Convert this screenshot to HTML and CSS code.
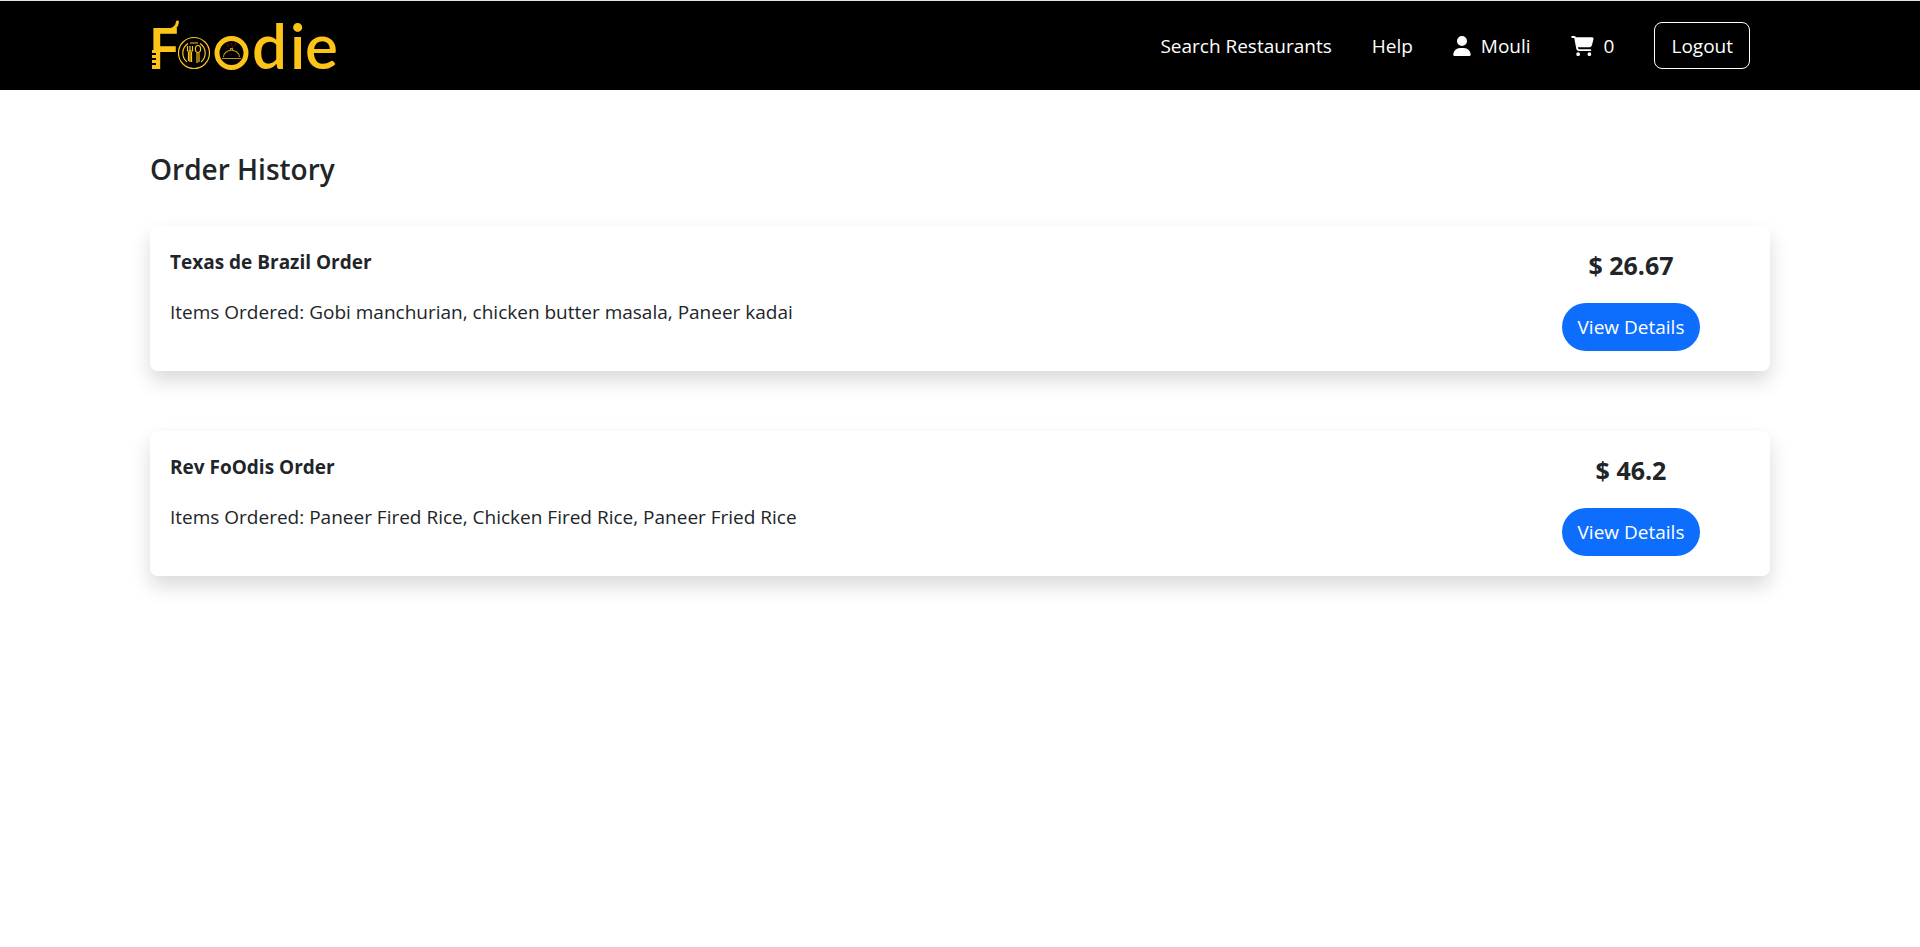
FILE: index.html
```html
<!DOCTYPE html>
<html lang="en">
<head>
<meta charset="utf-8">
<title>Foodie - Order History</title>
<link rel="stylesheet" href="styles.css">
</head>
<body>
<header class="navbar">
  <div class="container navbar-inner">
    <a class="brand" href="#" aria-label="Foodie">
      <svg class="brand-logo" viewBox="150 4 190 84" role="img">
        <text x="148" y="69" class="cap">F</text>
        <g class="letters">
          <text x="252" y="69">d</text>
          <text x="290" y="69">i</text>
          <text x="305" y="69">e</text>
        </g>
        <path class="solid" d="M152 50h4v3h-4zM152 55h4v3h-4zM152 60h4v3h-4zM152 65h5v4h-5z"/>
        <path class="notch" d="M151 54h5M151 59h5M151 64h5"/>
        <path class="swash" d="M166 30.500C173 30 177 27 177.500 22"/>
        <!-- plate with fork and spoon -->
        <circle class="line" cx="194" cy="53" r="15.500"/>
        <path class="line" d="M188 43.500A11.500 11.500 0 0 0 187 62M200 43.500A11.500 11.500 0 0 1 201 62M190 43H198"/>
        <path class="line" d="M187.500 46V51H192.500V46M190 46V62M188.500 52V61M191.500 52V62"/>
        <ellipse class="line" cx="198" cy="49" rx="2.600" ry="3.500"/>
        <path class="line" d="M197 53V63M199 53V62"/>
        <!-- covered dish -->
        <circle class="ring" cx="231.500" cy="53" r="14.500"/>
        <path class="dish" d="M223.500 57C224 48 239 48 239.500 57M222 58.500H241M230.500 50V48.500H232.500V50"/>
        <path class="steam" d="M227 44q2 1.500 1 3M231 43q-1 1.500 1 2.500t0 2.500M236 43q-2 1 -1 3"/>
      </svg>
    </a>
    <nav class="menu">
      <a href="#">Search Restaurants</a>
      <a href="#">Help</a>
      <a href="#"><svg class="icon-user" viewBox="0 0 448 512"><path d="M224 256A128 128 0 1 0 224 0a128 128 0 1 0 0 256zm-45.700 48C79.800 304 0 383.800 0 482.300C0 498.700 13.300 512 29.700 512H418.300c16.400 0 29.700-13.300 29.700-29.700C448 383.800 368.200 304 269.700 304H178.300z"/></svg>Mouli</a>
      <a href="#" aria-label="Cart, 0 items"><svg class="icon-cart" viewBox="0 0 576 512"><path d="M0 24C0 10.700 10.700 0 24 0H69.500c22 0 41.500 12.800 50.600 32h411c26.300 0 45.500 25 38.600 50.400l-41 152.300c-8.500 31.400-37 53.300-69.500 53.300H170.700l5.400 28.500c2.200 11.300 12.100 19.500 23.600 19.500H488c13.300 0 24 10.700 24 24s-10.700 24-24 24H199.700c-34.600 0-64.300-24.600-70.700-58.500L77.400 54.500c-.7-3.800-4-6.500-7.900-6.500H24C10.700 48 0 37.300 0 24zM128 464a48 48 0 1 1 96 0 48 48 0 1 1-96 0zm336-48a48 48 0 1 1 0 96 48 48 0 1 1 0-96z"/></svg>0</a>
      <button class="logout" type="button">Logout</button>
    </nav>
  </div>
</header>
<main class="container page">
  <h1 class="title">Order History</h1>
  <section class="orders">
    <article class="card">
      <div class="info">
        <h2 class="name">Texas de Brazil Order</h2>
        <p>Items Ordered: Gobi manchurian, chicken butter masala, Paneer kadai</p>
      </div>
      <div class="summary">
        <p class="price">$ 26.67</p>
        <button class="details" type="button">View Details</button>
      </div>
    </article>
    <article class="card">
      <div class="info">
        <h2 class="name">Rev FoOdis Order</h2>
        <p>Items Ordered: Paneer Fired Rice, Chicken Fired Rice, Paneer Fried Rice</p>
      </div>
      <div class="summary">
        <p class="price">$ 46.2</p>
        <button class="details" type="button">View Details</button>
      </div>
    </article>
  </section>
</main>
</body>
</html>
```

FILE: styles.css
```css
* { box-sizing: border-box; }
body { margin: 0; background: #fff; color: #212529; font: 19px/30px "Open Sans", "Noto Sans", sans-serif; }
h1, h2, p { margin: 0; }
button { font: inherit; cursor: pointer; }
.container { width: 100%; max-width: 1650px; margin: 0 auto; padding: 0 15px; }
.page { padding-bottom: 60px; }
.navbar { background: #000; border-top: 1px solid #dfe6e4; }
.navbar-inner { display: flex; align-items: center; justify-content: space-between; min-height: 89px; }
.brand { display: flex; }
.brand-logo { width: 190px; height: 84px; overflow: visible; }
.letters { font: 600 62px Lato, sans-serif; fill: #fcc419; }
.cap { font: 600 58px "Open Sans", sans-serif; fill: #fcc419; }
.solid { fill: #fcc419; }
.notch { fill: none; stroke: #000; stroke-width: 2; }
.swash { fill: none; stroke: #fcc419; stroke-width: 3; stroke-linecap: round; }
.line { fill: none; stroke: #fcc419; stroke-width: 1.2; }
.ring { fill: none; stroke: #fcc419; stroke-width: 5; }
.dish { fill: none; stroke: #b98f14; stroke-width: 1.2; }
.steam { fill: none; stroke: #8c1212; stroke-width: 1; }
.menu { display: flex; align-items: center; gap: 40px; padding-right: 20px; }
.menu a { display: flex; align-items: center; gap: 10px; color: #fff; text-decoration: none; }
.menu svg { fill: #fff; height: 20px; }
.icon-user { width: 18px; }
.icon-cart { width: 23px; }
.logout { height: 47px; padding: 0 16px; background: transparent; color: #fff; border: 1px solid #fff; border-radius: 8px; }
.title { padding: 59px 0 37px; font-size: 28px; font-weight: 600; line-height: 40px; }
.orders { display: grid; gap: 60px; }
.card { display: flex; background: #fff; border-radius: 8px; box-shadow: 0 10px 20px rgba(0, 0, 0, .15); }
.info { flex: 1; padding: 21px 20px; }
.name { font-size: 19px; font-weight: 700; line-height: 30px; margin-bottom: 20px; }
.summary { flex: 0 0 278px; display: flex; flex-direction: column; align-items: center; gap: 20px; padding: 21px 0 20px; }
.price { font-size: 25px; font-weight: 700; line-height: 36px; }
.details { height: 48px; padding: 0 16px; background: #0d6efd; color: #fff; border: 0; border-radius: 24px; }
```
